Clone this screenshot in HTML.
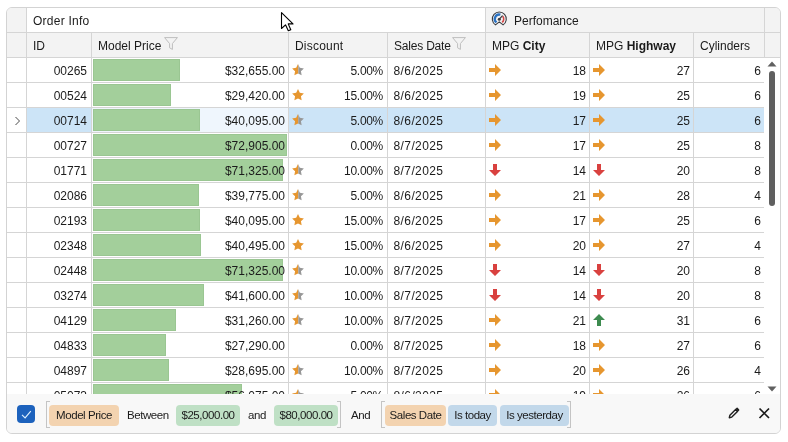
<!DOCTYPE html>
<html><head><meta charset="utf-8"><style>
html,body{margin:0;padding:0;background:#ffffff;width:788px;height:442px;overflow:hidden;}
body{position:relative;font-family:"Liberation Sans",sans-serif;font-size:12px;color:#1b1b1b;}
.ab{position:absolute;display:block;}
.t{position:absolute;white-space:nowrap;overflow:visible;}
.wrap{position:absolute;left:6px;top:7px;width:775px;height:427px;box-sizing:border-box;border:1px solid #d3d3d3;border-radius:6px;overflow:hidden;background:#fff;}
.layer{position:absolute;left:-7px;top:-8px;width:788px;height:442px;will-change:transform;}
</style></head><body>
<div class="wrap"><div class="layer">

<div class="ab" style="left:0;top:0;width:788px;height:57px;background:#f3f3f3"></div>
<div class="ab" style="left:27px;top:8px;width:458px;height:24px;background:#ffffff"></div>
<div class="ab" style="left:27px;top:108px;width:737px;height:24px;background:#cce4f7"></div>
<div class="ab" style="left:92px;top:108px;width:196px;height:24px;background:#eff6fd"></div>
<div class="ab" style="left:0;top:32px;width:788px;height:1px;background:#d5d5d5"></div>
<div class="ab" style="left:0;top:57px;width:788px;height:1px;background:#d5d5d5"></div>
<div class="ab" style="left:0;top:82px;width:764px;height:1px;background:#d5d5d5"></div>
<div class="ab" style="left:0;top:107px;width:764px;height:1px;background:#d5d5d5"></div>
<div class="ab" style="left:0;top:132px;width:764px;height:1px;background:#d5d5d5"></div>
<div class="ab" style="left:0;top:157px;width:764px;height:1px;background:#d5d5d5"></div>
<div class="ab" style="left:0;top:182px;width:764px;height:1px;background:#d5d5d5"></div>
<div class="ab" style="left:0;top:207px;width:764px;height:1px;background:#d5d5d5"></div>
<div class="ab" style="left:0;top:232px;width:764px;height:1px;background:#d5d5d5"></div>
<div class="ab" style="left:0;top:257px;width:764px;height:1px;background:#d5d5d5"></div>
<div class="ab" style="left:0;top:282px;width:764px;height:1px;background:#d5d5d5"></div>
<div class="ab" style="left:0;top:307px;width:764px;height:1px;background:#d5d5d5"></div>
<div class="ab" style="left:0;top:332px;width:764px;height:1px;background:#d5d5d5"></div>
<div class="ab" style="left:0;top:357px;width:764px;height:1px;background:#d5d5d5"></div>
<div class="ab" style="left:0;top:382px;width:764px;height:1px;background:#d5d5d5"></div>
<div class="ab" style="left:0;top:407px;width:764px;height:1px;background:#d5d5d5"></div>
<div class="ab" style="left:26px;top:8px;width:1px;height:400px;background:#d5d5d5"></div>
<div class="ab" style="left:91px;top:33px;width:1px;height:400px;background:#d5d5d5"></div>
<div class="ab" style="left:288px;top:33px;width:1px;height:400px;background:#d5d5d5"></div>
<div class="ab" style="left:387px;top:33px;width:1px;height:400px;background:#d5d5d5"></div>
<div class="ab" style="left:485px;top:8px;width:1px;height:400px;background:#d5d5d5"></div>
<div class="ab" style="left:589px;top:33px;width:1px;height:400px;background:#d5d5d5"></div>
<div class="ab" style="left:693px;top:33px;width:1px;height:400px;background:#d5d5d5"></div>
<div class="ab" style="left:764px;top:8px;width:1px;height:49px;background:#d5d5d5"></div>
<div class="t" style="left:33px;top:8px;width:200px;height:24px;line-height:24px;text-align:left;top:9px;letter-spacing:0.25px">Order Info</div>
<div class="t" style="left:514px;top:8px;width:200px;height:24px;line-height:24px;text-align:left;top:9px">Perfomance</div>
<svg class="ab" style="left:491px;top:11px" width="17" height="16" viewBox="491 11 17 16">
<path d="M495.5 24.9 A7 7 0 1 1 503.1 24.9 L499.3 21.9 Z" fill="none" stroke="#3a3d42" stroke-width="1.1" stroke-linejoin="round"/>
<path d="M496.5 22.4 A4.4 4.4 0 0 1 500.4 14.7" fill="none" stroke="#2b72c2" stroke-width="2.3"/>
<path d="M502.7 16.3 A4.4 4.4 0 0 1 502.2 22.3" fill="none" stroke="#d54545" stroke-width="1.7"/>
<path d="M499.3 19.2 L502.3 15.9" stroke="#3a3d42" stroke-width="1.2" stroke-linecap="round"/>
<circle cx="499.3" cy="19.3" r="1.5" fill="#3a3d42"/>
</svg>
<div class="t" style="left:33px;top:33px;width:60px;height:24px;line-height:24px;text-align:left;top:34px">ID</div>
<div class="t" style="left:98px;top:33px;width:100px;height:24px;line-height:24px;text-align:left;top:34px">Model Price</div>
<div class="t" style="left:295px;top:33px;width:100px;height:24px;line-height:24px;text-align:left;top:34px;letter-spacing:0.2px">Discount</div>
<div class="t" style="left:394px;top:33px;width:100px;height:24px;line-height:24px;text-align:left;top:34px;letter-spacing:-0.2px">Sales Date</div>
<div class="t" style="left:492px;top:33px;width:100px;height:24px;line-height:24px;text-align:left;top:34px">MPG <b>City</b></div>
<div class="t" style="left:596px;top:33px;width:100px;height:24px;line-height:24px;text-align:left;top:34px">MPG <b>Highway</b></div>
<div class="t" style="left:700px;top:33px;width:100px;height:24px;line-height:24px;text-align:left;top:34px">Cylinders</div>
<svg class="ab" style="left:164px;top:37px" width="14" height="13" viewBox="0 0 14 13"><path d="M0.6 0.6 H13.4 L8.4 6.6 V12.4 L5.6 10.8 V6.6 Z" fill="none" stroke="#bababa" stroke-width="0.95" stroke-linejoin="round"/></svg>
<svg class="ab" style="left:452px;top:37px" width="14" height="13" viewBox="0 0 14 13"><path d="M0.6 0.6 H13.4 L8.4 6.6 V12.4 L5.6 10.8 V6.6 Z" fill="none" stroke="#bababa" stroke-width="0.95" stroke-linejoin="round"/></svg>
<div class="ab" style="left:93px;top:59px;width:87px;height:22px;background:#a3cf9b;box-shadow:inset 0 0 0 1px #9ac692"></div>
<div class="t" style="left:28px;top:59px;width:59px;height:24px;line-height:24px;text-align:right;">00265</div>
<div class="t" style="left:93px;top:59px;width:192px;height:24px;line-height:24px;text-align:right;">$32,655.00</div>
<svg class="ab" style="left:292px;top:64.3px" width="12" height="12" viewBox="0 0 12 12"><defs><clipPath id="cl0"><rect x="0" y="0" width="6.3" height="12"/></clipPath><clipPath id="cr0"><rect x="6.3" y="0" width="6" height="12"/></clipPath></defs><path d="M6.00 0.10 L7.82 3.79 L11.90 4.38 L8.95 7.26 L9.64 11.32 L6.00 9.40 L2.36 11.32 L3.05 7.26 L0.10 4.38 L4.18 3.79 Z" fill="#e6962f" clip-path="url(#cl0)"/><path d="M6.00 0.10 L7.82 3.79 L11.90 4.38 L8.95 7.26 L9.64 11.32 L6.00 9.40 L2.36 11.32 L3.05 7.26 L0.10 4.38 L4.18 3.79 Z" fill="#979797" clip-path="url(#cr0)"/></svg>
<div class="t" style="left:289px;top:59px;width:94px;height:24px;line-height:24px;text-align:right;letter-spacing:-0.3px">5.00%</div>
<div class="t" style="left:393.5px;top:59px;width:90px;height:24px;line-height:24px;text-align:left;letter-spacing:0.4px">8/6/2025</div>
<svg class="ab" style="left:489px;top:64px" width="12" height="12" viewBox="0 0 12 12"><path d="M0 4 H6 V0 L12 6 L6 12 V8 H0 Z" fill="#e6962f"/></svg>
<div class="t" style="left:487px;top:59px;width:99px;height:24px;line-height:24px;text-align:right;">18</div>
<svg class="ab" style="left:593px;top:64px" width="12" height="12" viewBox="0 0 12 12"><path d="M0 4 H6 V0 L12 6 L6 12 V8 H0 Z" fill="#e6962f"/></svg>
<div class="t" style="left:591px;top:59px;width:99px;height:24px;line-height:24px;text-align:right;">27</div>
<div class="t" style="left:695px;top:59px;width:66px;height:24px;line-height:24px;text-align:right;">6</div>
<div class="ab" style="left:93px;top:84px;width:78px;height:22px;background:#a3cf9b;box-shadow:inset 0 0 0 1px #9ac692"></div>
<div class="t" style="left:28px;top:84px;width:59px;height:24px;line-height:24px;text-align:right;">00524</div>
<div class="t" style="left:93px;top:84px;width:192px;height:24px;line-height:24px;text-align:right;">$29,420.00</div>
<svg class="ab" style="left:292px;top:89.3px" width="12" height="12" viewBox="0 0 12 12"><path d="M6.00 0.10 L7.82 3.79 L11.90 4.38 L8.95 7.26 L9.64 11.32 L6.00 9.40 L2.36 11.32 L3.05 7.26 L0.10 4.38 L4.18 3.79 Z" fill="#e6962f"/></svg>
<div class="t" style="left:289px;top:84px;width:94px;height:24px;line-height:24px;text-align:right;letter-spacing:-0.3px">15.00%</div>
<div class="t" style="left:393.5px;top:84px;width:90px;height:24px;line-height:24px;text-align:left;letter-spacing:0.4px">8/6/2025</div>
<svg class="ab" style="left:489px;top:89px" width="12" height="12" viewBox="0 0 12 12"><path d="M0 4 H6 V0 L12 6 L6 12 V8 H0 Z" fill="#e6962f"/></svg>
<div class="t" style="left:487px;top:84px;width:99px;height:24px;line-height:24px;text-align:right;">19</div>
<svg class="ab" style="left:593px;top:89px" width="12" height="12" viewBox="0 0 12 12"><path d="M0 4 H6 V0 L12 6 L6 12 V8 H0 Z" fill="#e6962f"/></svg>
<div class="t" style="left:591px;top:84px;width:99px;height:24px;line-height:24px;text-align:right;">25</div>
<div class="t" style="left:695px;top:84px;width:66px;height:24px;line-height:24px;text-align:right;">6</div>
<div class="ab" style="left:93px;top:109px;width:107px;height:22px;background:#a3cf9b;box-shadow:inset 0 0 0 1px #9ac692"></div>
<div class="t" style="left:28px;top:109px;width:59px;height:24px;line-height:24px;text-align:right;">00714</div>
<div class="t" style="left:93px;top:109px;width:192px;height:24px;line-height:24px;text-align:right;">$40,095.00</div>
<svg class="ab" style="left:292px;top:114.3px" width="12" height="12" viewBox="0 0 12 12"><defs><clipPath id="cl2"><rect x="0" y="0" width="6.3" height="12"/></clipPath><clipPath id="cr2"><rect x="6.3" y="0" width="6" height="12"/></clipPath></defs><path d="M6.00 0.10 L7.82 3.79 L11.90 4.38 L8.95 7.26 L9.64 11.32 L6.00 9.40 L2.36 11.32 L3.05 7.26 L0.10 4.38 L4.18 3.79 Z" fill="#e6962f" clip-path="url(#cl2)"/><path d="M6.00 0.10 L7.82 3.79 L11.90 4.38 L8.95 7.26 L9.64 11.32 L6.00 9.40 L2.36 11.32 L3.05 7.26 L0.10 4.38 L4.18 3.79 Z" fill="#979797" clip-path="url(#cr2)"/></svg>
<div class="t" style="left:289px;top:109px;width:94px;height:24px;line-height:24px;text-align:right;letter-spacing:-0.3px">5.00%</div>
<div class="t" style="left:393.5px;top:109px;width:90px;height:24px;line-height:24px;text-align:left;letter-spacing:0.4px">8/6/2025</div>
<svg class="ab" style="left:489px;top:114px" width="12" height="12" viewBox="0 0 12 12"><path d="M0 4 H6 V0 L12 6 L6 12 V8 H0 Z" fill="#e6962f"/></svg>
<div class="t" style="left:487px;top:109px;width:99px;height:24px;line-height:24px;text-align:right;">17</div>
<svg class="ab" style="left:593px;top:114px" width="12" height="12" viewBox="0 0 12 12"><path d="M0 4 H6 V0 L12 6 L6 12 V8 H0 Z" fill="#e6962f"/></svg>
<div class="t" style="left:591px;top:109px;width:99px;height:24px;line-height:24px;text-align:right;">25</div>
<div class="t" style="left:695px;top:109px;width:66px;height:24px;line-height:24px;text-align:right;">6</div>
<div class="ab" style="left:93px;top:134px;width:194px;height:22px;background:#a3cf9b;box-shadow:inset 0 0 0 1px #9ac692"></div>
<div class="t" style="left:28px;top:134px;width:59px;height:24px;line-height:24px;text-align:right;">00727</div>
<div class="t" style="left:93px;top:134px;width:192px;height:24px;line-height:24px;text-align:right;">$72,905.00</div>

<div class="t" style="left:289px;top:134px;width:94px;height:24px;line-height:24px;text-align:right;letter-spacing:-0.3px">0.00%</div>
<div class="t" style="left:393.5px;top:134px;width:90px;height:24px;line-height:24px;text-align:left;letter-spacing:0.4px">8/7/2025</div>
<svg class="ab" style="left:489px;top:139px" width="12" height="12" viewBox="0 0 12 12"><path d="M0 4 H6 V0 L12 6 L6 12 V8 H0 Z" fill="#e6962f"/></svg>
<div class="t" style="left:487px;top:134px;width:99px;height:24px;line-height:24px;text-align:right;">17</div>
<svg class="ab" style="left:593px;top:139px" width="12" height="12" viewBox="0 0 12 12"><path d="M0 4 H6 V0 L12 6 L6 12 V8 H0 Z" fill="#e6962f"/></svg>
<div class="t" style="left:591px;top:134px;width:99px;height:24px;line-height:24px;text-align:right;">25</div>
<div class="t" style="left:695px;top:134px;width:66px;height:24px;line-height:24px;text-align:right;">8</div>
<div class="ab" style="left:93px;top:159px;width:190px;height:22px;background:#a3cf9b;box-shadow:inset 0 0 0 1px #9ac692"></div>
<div class="t" style="left:28px;top:159px;width:59px;height:24px;line-height:24px;text-align:right;">01771</div>
<div class="t" style="left:93px;top:159px;width:192px;height:24px;line-height:24px;text-align:right;">$71,325.00</div>
<svg class="ab" style="left:292px;top:164.3px" width="12" height="12" viewBox="0 0 12 12"><defs><clipPath id="cl4"><rect x="0" y="0" width="6.3" height="12"/></clipPath><clipPath id="cr4"><rect x="6.3" y="0" width="6" height="12"/></clipPath></defs><path d="M6.00 0.10 L7.82 3.79 L11.90 4.38 L8.95 7.26 L9.64 11.32 L6.00 9.40 L2.36 11.32 L3.05 7.26 L0.10 4.38 L4.18 3.79 Z" fill="#e6962f" clip-path="url(#cl4)"/><path d="M6.00 0.10 L7.82 3.79 L11.90 4.38 L8.95 7.26 L9.64 11.32 L6.00 9.40 L2.36 11.32 L3.05 7.26 L0.10 4.38 L4.18 3.79 Z" fill="#979797" clip-path="url(#cr4)"/></svg>
<div class="t" style="left:289px;top:159px;width:94px;height:24px;line-height:24px;text-align:right;letter-spacing:-0.3px">10.00%</div>
<div class="t" style="left:393.5px;top:159px;width:90px;height:24px;line-height:24px;text-align:left;letter-spacing:0.4px">8/7/2025</div>
<svg class="ab" style="left:489px;top:164px" width="12" height="12" viewBox="0 0 12 12"><path d="M4 0 H8 V6 H12 L6 12 L0 6 H4 Z" fill="#d9413f"/></svg>
<div class="t" style="left:487px;top:159px;width:99px;height:24px;line-height:24px;text-align:right;">14</div>
<svg class="ab" style="left:593px;top:164px" width="12" height="12" viewBox="0 0 12 12"><path d="M4 0 H8 V6 H12 L6 12 L0 6 H4 Z" fill="#d9413f"/></svg>
<div class="t" style="left:591px;top:159px;width:99px;height:24px;line-height:24px;text-align:right;">20</div>
<div class="t" style="left:695px;top:159px;width:66px;height:24px;line-height:24px;text-align:right;">8</div>
<div class="ab" style="left:93px;top:184px;width:106px;height:22px;background:#a3cf9b;box-shadow:inset 0 0 0 1px #9ac692"></div>
<div class="t" style="left:28px;top:184px;width:59px;height:24px;line-height:24px;text-align:right;">02086</div>
<div class="t" style="left:93px;top:184px;width:192px;height:24px;line-height:24px;text-align:right;">$39,775.00</div>
<svg class="ab" style="left:292px;top:189.3px" width="12" height="12" viewBox="0 0 12 12"><defs><clipPath id="cl5"><rect x="0" y="0" width="6.3" height="12"/></clipPath><clipPath id="cr5"><rect x="6.3" y="0" width="6" height="12"/></clipPath></defs><path d="M6.00 0.10 L7.82 3.79 L11.90 4.38 L8.95 7.26 L9.64 11.32 L6.00 9.40 L2.36 11.32 L3.05 7.26 L0.10 4.38 L4.18 3.79 Z" fill="#e6962f" clip-path="url(#cl5)"/><path d="M6.00 0.10 L7.82 3.79 L11.90 4.38 L8.95 7.26 L9.64 11.32 L6.00 9.40 L2.36 11.32 L3.05 7.26 L0.10 4.38 L4.18 3.79 Z" fill="#979797" clip-path="url(#cr5)"/></svg>
<div class="t" style="left:289px;top:184px;width:94px;height:24px;line-height:24px;text-align:right;letter-spacing:-0.3px">5.00%</div>
<div class="t" style="left:393.5px;top:184px;width:90px;height:24px;line-height:24px;text-align:left;letter-spacing:0.4px">8/6/2025</div>
<svg class="ab" style="left:489px;top:189px" width="12" height="12" viewBox="0 0 12 12"><path d="M0 4 H6 V0 L12 6 L6 12 V8 H0 Z" fill="#e6962f"/></svg>
<div class="t" style="left:487px;top:184px;width:99px;height:24px;line-height:24px;text-align:right;">21</div>
<svg class="ab" style="left:593px;top:189px" width="12" height="12" viewBox="0 0 12 12"><path d="M0 4 H6 V0 L12 6 L6 12 V8 H0 Z" fill="#e6962f"/></svg>
<div class="t" style="left:591px;top:184px;width:99px;height:24px;line-height:24px;text-align:right;">28</div>
<div class="t" style="left:695px;top:184px;width:66px;height:24px;line-height:24px;text-align:right;">4</div>
<div class="ab" style="left:93px;top:209px;width:107px;height:22px;background:#a3cf9b;box-shadow:inset 0 0 0 1px #9ac692"></div>
<div class="t" style="left:28px;top:209px;width:59px;height:24px;line-height:24px;text-align:right;">02193</div>
<div class="t" style="left:93px;top:209px;width:192px;height:24px;line-height:24px;text-align:right;">$40,095.00</div>
<svg class="ab" style="left:292px;top:214.3px" width="12" height="12" viewBox="0 0 12 12"><path d="M6.00 0.10 L7.82 3.79 L11.90 4.38 L8.95 7.26 L9.64 11.32 L6.00 9.40 L2.36 11.32 L3.05 7.26 L0.10 4.38 L4.18 3.79 Z" fill="#e6962f"/></svg>
<div class="t" style="left:289px;top:209px;width:94px;height:24px;line-height:24px;text-align:right;letter-spacing:-0.3px">15.00%</div>
<div class="t" style="left:393.5px;top:209px;width:90px;height:24px;line-height:24px;text-align:left;letter-spacing:0.4px">8/6/2025</div>
<svg class="ab" style="left:489px;top:214px" width="12" height="12" viewBox="0 0 12 12"><path d="M0 4 H6 V0 L12 6 L6 12 V8 H0 Z" fill="#e6962f"/></svg>
<div class="t" style="left:487px;top:209px;width:99px;height:24px;line-height:24px;text-align:right;">17</div>
<svg class="ab" style="left:593px;top:214px" width="12" height="12" viewBox="0 0 12 12"><path d="M0 4 H6 V0 L12 6 L6 12 V8 H0 Z" fill="#e6962f"/></svg>
<div class="t" style="left:591px;top:209px;width:99px;height:24px;line-height:24px;text-align:right;">25</div>
<div class="t" style="left:695px;top:209px;width:66px;height:24px;line-height:24px;text-align:right;">6</div>
<div class="ab" style="left:93px;top:234px;width:108px;height:22px;background:#a3cf9b;box-shadow:inset 0 0 0 1px #9ac692"></div>
<div class="t" style="left:28px;top:234px;width:59px;height:24px;line-height:24px;text-align:right;">02348</div>
<div class="t" style="left:93px;top:234px;width:192px;height:24px;line-height:24px;text-align:right;">$40,495.00</div>
<svg class="ab" style="left:292px;top:239.3px" width="12" height="12" viewBox="0 0 12 12"><path d="M6.00 0.10 L7.82 3.79 L11.90 4.38 L8.95 7.26 L9.64 11.32 L6.00 9.40 L2.36 11.32 L3.05 7.26 L0.10 4.38 L4.18 3.79 Z" fill="#e6962f"/></svg>
<div class="t" style="left:289px;top:234px;width:94px;height:24px;line-height:24px;text-align:right;letter-spacing:-0.3px">15.00%</div>
<div class="t" style="left:393.5px;top:234px;width:90px;height:24px;line-height:24px;text-align:left;letter-spacing:0.4px">8/6/2025</div>
<svg class="ab" style="left:489px;top:239px" width="12" height="12" viewBox="0 0 12 12"><path d="M0 4 H6 V0 L12 6 L6 12 V8 H0 Z" fill="#e6962f"/></svg>
<div class="t" style="left:487px;top:234px;width:99px;height:24px;line-height:24px;text-align:right;">20</div>
<svg class="ab" style="left:593px;top:239px" width="12" height="12" viewBox="0 0 12 12"><path d="M0 4 H6 V0 L12 6 L6 12 V8 H0 Z" fill="#e6962f"/></svg>
<div class="t" style="left:591px;top:234px;width:99px;height:24px;line-height:24px;text-align:right;">27</div>
<div class="t" style="left:695px;top:234px;width:66px;height:24px;line-height:24px;text-align:right;">4</div>
<div class="ab" style="left:93px;top:259px;width:190px;height:22px;background:#a3cf9b;box-shadow:inset 0 0 0 1px #9ac692"></div>
<div class="t" style="left:28px;top:259px;width:59px;height:24px;line-height:24px;text-align:right;">02448</div>
<div class="t" style="left:93px;top:259px;width:192px;height:24px;line-height:24px;text-align:right;">$71,325.00</div>
<svg class="ab" style="left:292px;top:264.3px" width="12" height="12" viewBox="0 0 12 12"><defs><clipPath id="cl8"><rect x="0" y="0" width="6.3" height="12"/></clipPath><clipPath id="cr8"><rect x="6.3" y="0" width="6" height="12"/></clipPath></defs><path d="M6.00 0.10 L7.82 3.79 L11.90 4.38 L8.95 7.26 L9.64 11.32 L6.00 9.40 L2.36 11.32 L3.05 7.26 L0.10 4.38 L4.18 3.79 Z" fill="#e6962f" clip-path="url(#cl8)"/><path d="M6.00 0.10 L7.82 3.79 L11.90 4.38 L8.95 7.26 L9.64 11.32 L6.00 9.40 L2.36 11.32 L3.05 7.26 L0.10 4.38 L4.18 3.79 Z" fill="#979797" clip-path="url(#cr8)"/></svg>
<div class="t" style="left:289px;top:259px;width:94px;height:24px;line-height:24px;text-align:right;letter-spacing:-0.3px">10.00%</div>
<div class="t" style="left:393.5px;top:259px;width:90px;height:24px;line-height:24px;text-align:left;letter-spacing:0.4px">8/7/2025</div>
<svg class="ab" style="left:489px;top:264px" width="12" height="12" viewBox="0 0 12 12"><path d="M4 0 H8 V6 H12 L6 12 L0 6 H4 Z" fill="#d9413f"/></svg>
<div class="t" style="left:487px;top:259px;width:99px;height:24px;line-height:24px;text-align:right;">14</div>
<svg class="ab" style="left:593px;top:264px" width="12" height="12" viewBox="0 0 12 12"><path d="M4 0 H8 V6 H12 L6 12 L0 6 H4 Z" fill="#d9413f"/></svg>
<div class="t" style="left:591px;top:259px;width:99px;height:24px;line-height:24px;text-align:right;">20</div>
<div class="t" style="left:695px;top:259px;width:66px;height:24px;line-height:24px;text-align:right;">8</div>
<div class="ab" style="left:93px;top:284px;width:111px;height:22px;background:#a3cf9b;box-shadow:inset 0 0 0 1px #9ac692"></div>
<div class="t" style="left:28px;top:284px;width:59px;height:24px;line-height:24px;text-align:right;">03274</div>
<div class="t" style="left:93px;top:284px;width:192px;height:24px;line-height:24px;text-align:right;">$41,600.00</div>
<svg class="ab" style="left:292px;top:289.3px" width="12" height="12" viewBox="0 0 12 12"><defs><clipPath id="cl9"><rect x="0" y="0" width="6.3" height="12"/></clipPath><clipPath id="cr9"><rect x="6.3" y="0" width="6" height="12"/></clipPath></defs><path d="M6.00 0.10 L7.82 3.79 L11.90 4.38 L8.95 7.26 L9.64 11.32 L6.00 9.40 L2.36 11.32 L3.05 7.26 L0.10 4.38 L4.18 3.79 Z" fill="#e6962f" clip-path="url(#cl9)"/><path d="M6.00 0.10 L7.82 3.79 L11.90 4.38 L8.95 7.26 L9.64 11.32 L6.00 9.40 L2.36 11.32 L3.05 7.26 L0.10 4.38 L4.18 3.79 Z" fill="#979797" clip-path="url(#cr9)"/></svg>
<div class="t" style="left:289px;top:284px;width:94px;height:24px;line-height:24px;text-align:right;letter-spacing:-0.3px">10.00%</div>
<div class="t" style="left:393.5px;top:284px;width:90px;height:24px;line-height:24px;text-align:left;letter-spacing:0.4px">8/7/2025</div>
<svg class="ab" style="left:489px;top:289px" width="12" height="12" viewBox="0 0 12 12"><path d="M4 0 H8 V6 H12 L6 12 L0 6 H4 Z" fill="#d9413f"/></svg>
<div class="t" style="left:487px;top:284px;width:99px;height:24px;line-height:24px;text-align:right;">14</div>
<svg class="ab" style="left:593px;top:289px" width="12" height="12" viewBox="0 0 12 12"><path d="M4 0 H8 V6 H12 L6 12 L0 6 H4 Z" fill="#d9413f"/></svg>
<div class="t" style="left:591px;top:284px;width:99px;height:24px;line-height:24px;text-align:right;">20</div>
<div class="t" style="left:695px;top:284px;width:66px;height:24px;line-height:24px;text-align:right;">8</div>
<div class="ab" style="left:93px;top:309px;width:83px;height:22px;background:#a3cf9b;box-shadow:inset 0 0 0 1px #9ac692"></div>
<div class="t" style="left:28px;top:309px;width:59px;height:24px;line-height:24px;text-align:right;">04129</div>
<div class="t" style="left:93px;top:309px;width:192px;height:24px;line-height:24px;text-align:right;">$31,260.00</div>
<svg class="ab" style="left:292px;top:314.3px" width="12" height="12" viewBox="0 0 12 12"><defs><clipPath id="cl10"><rect x="0" y="0" width="6.3" height="12"/></clipPath><clipPath id="cr10"><rect x="6.3" y="0" width="6" height="12"/></clipPath></defs><path d="M6.00 0.10 L7.82 3.79 L11.90 4.38 L8.95 7.26 L9.64 11.32 L6.00 9.40 L2.36 11.32 L3.05 7.26 L0.10 4.38 L4.18 3.79 Z" fill="#e6962f" clip-path="url(#cl10)"/><path d="M6.00 0.10 L7.82 3.79 L11.90 4.38 L8.95 7.26 L9.64 11.32 L6.00 9.40 L2.36 11.32 L3.05 7.26 L0.10 4.38 L4.18 3.79 Z" fill="#979797" clip-path="url(#cr10)"/></svg>
<div class="t" style="left:289px;top:309px;width:94px;height:24px;line-height:24px;text-align:right;letter-spacing:-0.3px">10.00%</div>
<div class="t" style="left:393.5px;top:309px;width:90px;height:24px;line-height:24px;text-align:left;letter-spacing:0.4px">8/7/2025</div>
<svg class="ab" style="left:489px;top:314px" width="12" height="12" viewBox="0 0 12 12"><path d="M0 4 H6 V0 L12 6 L6 12 V8 H0 Z" fill="#e6962f"/></svg>
<div class="t" style="left:487px;top:309px;width:99px;height:24px;line-height:24px;text-align:right;">21</div>
<svg class="ab" style="left:593px;top:314px" width="12" height="12" viewBox="0 0 12 12"><path d="M4 12 H8 V6 H12 L6 0 L0 6 H4 Z" fill="#3d8b4f"/></svg>
<div class="t" style="left:591px;top:309px;width:99px;height:24px;line-height:24px;text-align:right;">31</div>
<div class="t" style="left:695px;top:309px;width:66px;height:24px;line-height:24px;text-align:right;">6</div>
<div class="ab" style="left:93px;top:334px;width:73px;height:22px;background:#a3cf9b;box-shadow:inset 0 0 0 1px #9ac692"></div>
<div class="t" style="left:28px;top:334px;width:59px;height:24px;line-height:24px;text-align:right;">04833</div>
<div class="t" style="left:93px;top:334px;width:192px;height:24px;line-height:24px;text-align:right;">$27,290.00</div>

<div class="t" style="left:289px;top:334px;width:94px;height:24px;line-height:24px;text-align:right;letter-spacing:-0.3px">0.00%</div>
<div class="t" style="left:393.5px;top:334px;width:90px;height:24px;line-height:24px;text-align:left;letter-spacing:0.4px">8/7/2025</div>
<svg class="ab" style="left:489px;top:339px" width="12" height="12" viewBox="0 0 12 12"><path d="M0 4 H6 V0 L12 6 L6 12 V8 H0 Z" fill="#e6962f"/></svg>
<div class="t" style="left:487px;top:334px;width:99px;height:24px;line-height:24px;text-align:right;">18</div>
<svg class="ab" style="left:593px;top:339px" width="12" height="12" viewBox="0 0 12 12"><path d="M0 4 H6 V0 L12 6 L6 12 V8 H0 Z" fill="#e6962f"/></svg>
<div class="t" style="left:591px;top:334px;width:99px;height:24px;line-height:24px;text-align:right;">27</div>
<div class="t" style="left:695px;top:334px;width:66px;height:24px;line-height:24px;text-align:right;">6</div>
<div class="ab" style="left:93px;top:359px;width:76px;height:22px;background:#a3cf9b;box-shadow:inset 0 0 0 1px #9ac692"></div>
<div class="t" style="left:28px;top:359px;width:59px;height:24px;line-height:24px;text-align:right;">04897</div>
<div class="t" style="left:93px;top:359px;width:192px;height:24px;line-height:24px;text-align:right;">$28,695.00</div>
<svg class="ab" style="left:292px;top:364.3px" width="12" height="12" viewBox="0 0 12 12"><defs><clipPath id="cl12"><rect x="0" y="0" width="6.3" height="12"/></clipPath><clipPath id="cr12"><rect x="6.3" y="0" width="6" height="12"/></clipPath></defs><path d="M6.00 0.10 L7.82 3.79 L11.90 4.38 L8.95 7.26 L9.64 11.32 L6.00 9.40 L2.36 11.32 L3.05 7.26 L0.10 4.38 L4.18 3.79 Z" fill="#e6962f" clip-path="url(#cl12)"/><path d="M6.00 0.10 L7.82 3.79 L11.90 4.38 L8.95 7.26 L9.64 11.32 L6.00 9.40 L2.36 11.32 L3.05 7.26 L0.10 4.38 L4.18 3.79 Z" fill="#979797" clip-path="url(#cr12)"/></svg>
<div class="t" style="left:289px;top:359px;width:94px;height:24px;line-height:24px;text-align:right;letter-spacing:-0.3px">10.00%</div>
<div class="t" style="left:393.5px;top:359px;width:90px;height:24px;line-height:24px;text-align:left;letter-spacing:0.4px">8/7/2025</div>
<svg class="ab" style="left:489px;top:364px" width="12" height="12" viewBox="0 0 12 12"><path d="M0 4 H6 V0 L12 6 L6 12 V8 H0 Z" fill="#e6962f"/></svg>
<div class="t" style="left:487px;top:359px;width:99px;height:24px;line-height:24px;text-align:right;">20</div>
<svg class="ab" style="left:593px;top:364px" width="12" height="12" viewBox="0 0 12 12"><path d="M0 4 H6 V0 L12 6 L6 12 V8 H0 Z" fill="#e6962f"/></svg>
<div class="t" style="left:591px;top:359px;width:99px;height:24px;line-height:24px;text-align:right;">26</div>
<div class="t" style="left:695px;top:359px;width:66px;height:24px;line-height:24px;text-align:right;">4</div>
<div class="ab" style="left:93px;top:384px;width:149px;height:22px;background:#a3cf9b;box-shadow:inset 0 0 0 1px #9ac692"></div>
<div class="t" style="left:28px;top:384px;width:59px;height:24px;line-height:24px;text-align:right;">05073</div>
<div class="t" style="left:93px;top:384px;width:192px;height:24px;line-height:24px;text-align:right;">$56,075.00</div>
<svg class="ab" style="left:292px;top:389.3px" width="12" height="12" viewBox="0 0 12 12"><defs><clipPath id="cl13"><rect x="0" y="0" width="6.3" height="12"/></clipPath><clipPath id="cr13"><rect x="6.3" y="0" width="6" height="12"/></clipPath></defs><path d="M6.00 0.10 L7.82 3.79 L11.90 4.38 L8.95 7.26 L9.64 11.32 L6.00 9.40 L2.36 11.32 L3.05 7.26 L0.10 4.38 L4.18 3.79 Z" fill="#e6962f" clip-path="url(#cl13)"/><path d="M6.00 0.10 L7.82 3.79 L11.90 4.38 L8.95 7.26 L9.64 11.32 L6.00 9.40 L2.36 11.32 L3.05 7.26 L0.10 4.38 L4.18 3.79 Z" fill="#979797" clip-path="url(#cr13)"/></svg>
<div class="t" style="left:289px;top:384px;width:94px;height:24px;line-height:24px;text-align:right;letter-spacing:-0.3px">5.00%</div>
<div class="t" style="left:393.5px;top:384px;width:90px;height:24px;line-height:24px;text-align:left;letter-spacing:0.4px">8/6/2025</div>
<svg class="ab" style="left:489px;top:389px" width="12" height="12" viewBox="0 0 12 12"><path d="M0 4 H6 V0 L12 6 L6 12 V8 H0 Z" fill="#e6962f"/></svg>
<div class="t" style="left:487px;top:384px;width:99px;height:24px;line-height:24px;text-align:right;">19</div>
<svg class="ab" style="left:593px;top:389px" width="12" height="12" viewBox="0 0 12 12"><path d="M0 4 H6 V0 L12 6 L6 12 V8 H0 Z" fill="#e6962f"/></svg>
<div class="t" style="left:591px;top:384px;width:99px;height:24px;line-height:24px;text-align:right;">26</div>
<div class="t" style="left:695px;top:384px;width:66px;height:24px;line-height:24px;text-align:right;">6</div>
<svg class="ab" style="left:14px;top:116px" width="7" height="10" viewBox="0 0 7 10"><path d="M1.5 1 L5.5 5 L1.5 9" fill="none" stroke="#4a4a4a" stroke-width="1"/></svg>
<div class="ab" style="left:765px;top:58px;width:15px;height:336px;background:#ffffff"></div>
<svg class="ab" style="left:767px;top:61px" width="10" height="6" viewBox="0 0 10 6"><path d="M0.5 5.5 L5 0.5 L9.5 5.5 Z" fill="#606060"/></svg>
<div class="ab" style="left:769px;top:71px;width:6px;height:135px;border-radius:3px;background:#5f5f5f"></div>
<svg class="ab" style="left:767px;top:386px" width="10" height="6" viewBox="0 0 10 6"><path d="M0.5 0.5 L5 5.5 L9.5 0.5 Z" fill="#606060"/></svg>
<div class="ab" style="left:0;top:394px;width:788px;height:48px;background:#f8f8f8"></div>
<div class="ab" style="left:17px;top:405px;width:18px;height:18px;border-radius:4px;background:#1d62bd"></div>
<svg class="ab" style="left:17px;top:405px" width="18" height="18" viewBox="0 0 18 18"><path d="M5 9.8 L8.1 12.8 L13.8 6.2" fill="none" stroke="#dff0ff" stroke-width="1.15"/></svg>
<div class="ab" style="left:46px;top:401px;width:4px;height:27px;border:1px solid #c4c4c4;border-right:none;box-sizing:border-box"></div>
<div class="t" style="left:49px;top:404.5px;width:70px;height:21px;line-height:21px;border-radius:4px;background:#f3d3b0;text-align:center;font-size:11.5px;letter-spacing:-0.45px">Model Price</div>
<div class="t" style="left:127px;top:404.5px;height:21px;line-height:21px;font-size:11.5px;letter-spacing:-0.45px">Between</div>
<div class="t" style="left:176px;top:404.5px;width:64px;height:21px;line-height:21px;border-radius:4px;background:#bfe0c5;text-align:center;font-size:11.5px;letter-spacing:-0.45px">$25,000.00</div>
<div class="t" style="left:248px;top:404.5px;height:21px;line-height:21px;font-size:11.5px;letter-spacing:-0.45px">and</div>
<div class="t" style="left:274px;top:404.5px;width:64px;height:21px;line-height:21px;border-radius:4px;background:#bfe0c5;text-align:center;font-size:11.5px;letter-spacing:-0.45px">$80,000.00</div>
<div class="ab" style="left:337px;top:401px;width:4px;height:27px;border:1px solid #c4c4c4;border-left:none;box-sizing:border-box"></div>
<div class="t" style="left:351px;top:404.5px;height:21px;line-height:21px;font-size:11.5px;letter-spacing:-0.45px">And</div>
<div class="ab" style="left:381px;top:401px;width:4px;height:27px;border:1px solid #c4c4c4;border-right:none;box-sizing:border-box"></div>
<div class="t" style="left:385px;top:404.5px;width:61px;height:21px;line-height:21px;border-radius:4px;background:#f3d3b0;text-align:center;font-size:11.5px;letter-spacing:-0.45px">Sales Date</div>
<div class="t" style="left:448px;top:404.5px;width:49px;height:21px;line-height:21px;border-radius:4px;background:#c2d8ea;text-align:center;font-size:11.5px;letter-spacing:-0.45px">Is today</div>
<div class="t" style="left:500px;top:404.5px;width:69px;height:21px;line-height:21px;border-radius:4px;background:#c2d8ea;text-align:center;font-size:11.5px;letter-spacing:-0.45px">Is yesterday</div>
<div class="ab" style="left:567px;top:401px;width:4px;height:27px;border:1px solid #c4c4c4;border-left:none;box-sizing:border-box"></div>
<svg class="ab" style="left:728px;top:407px" width="12" height="12" viewBox="0 0 12 12"><path d="M1.3 10.7 L1.9 8.2 L7.6 2.5 L9.5 4.4 L3.8 10.1 Z" fill="none" stroke="#1f1f1f" stroke-width="1.4" stroke-linejoin="round"/><path d="M7.4 1.9 L8.6 0.8 Q9.1 0.4 9.6 0.8 L11.2 2.4 Q11.6 2.9 11.2 3.4 L10.1 4.6 Z" fill="#1f1f1f"/></svg>
<svg class="ab" style="left:758px;top:407px" width="12" height="12" viewBox="0 0 12 12"><path d="M1.5 1.5 L11 11 M11 1.5 L1.5 11" stroke="#1a1a1a" stroke-width="1.7"/></svg>
</div></div>
<svg class="ab" style="left:280px;top:11px" width="14" height="21" viewBox="0 0 14 21"><path d="M1.5 1.6 L1.5 17.5 L5.5 13.8 L8.3 19.8 L10.8 18.7 L8.2 12.9 L13 12.9 Z" fill="#fff" stroke="#000" stroke-width="1.1" stroke-linejoin="round"/></svg>
</body></html>
